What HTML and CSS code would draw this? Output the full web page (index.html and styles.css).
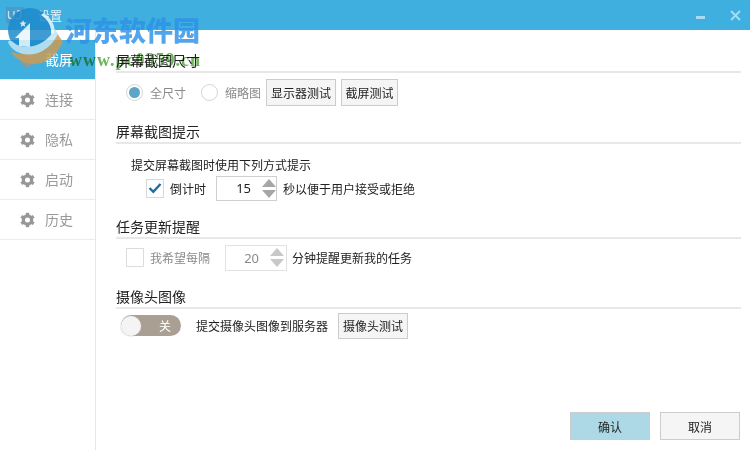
FILE: index.html
```html
<!DOCTYPE html>
<html lang="zh">
<head>
<meta charset="utf-8">
<title>设置</title>
<link rel="stylesheet" href="styles.css">
</head>
<body>
<div class="window">
  <header class="titlebar">
    <div class="title-left">
      <svg class="app-icon" width="18" height="16" viewBox="0 0 18 16"><path d="M2.500 4v5c0 3.500 5.500 3.500 5.500 0V4M11 4h4v5c0 3-3.500 3.500-5 1.500" fill="none" stroke="#c6e4f3" stroke-width="1.300"/></svg>
      <span>设置</span>
    </div>
    <div class="win-controls">
      <span class="win-min"></span>
      <svg width="11" height="11" viewBox="0 0 11 11"><path d="M1 1l9 9M10 1l-9 9" stroke="#a8daf2" stroke-width="2"/></svg>
    </div>
  </header>
  <div class="body">
    <nav class="sidebar">
      <div class="nav-item active"><svg class="gear" viewBox="0 0 16 16"><use href="#gear"/></svg><span>截屏</span></div>
      <div class="nav-item"><svg class="gear" viewBox="0 0 16 16"><use href="#gear"/></svg><span>连接</span></div>
      <div class="nav-item"><svg class="gear" viewBox="0 0 16 16"><use href="#gear"/></svg><span>隐私</span></div>
      <div class="nav-item"><svg class="gear" viewBox="0 0 16 16"><use href="#gear"/></svg><span>启动</span></div>
      <div class="nav-item"><svg class="gear" viewBox="0 0 16 16"><use href="#gear"/></svg><span>历史</span></div>
    </nav>
    <main class="content">
      <section class="sec sec-size">
        <h2>屏幕截图尺寸</h2>
        <div class="row row-size">
          <span class="radio on"></span><span class="muted lbl-full">全尺寸</span>
          <span class="radio"></span><span class="muted lbl-thumb">缩略图</span>
          <button class="btn btn-monitor">显示器测试</button>
          <button class="btn btn-shot">截屏测试</button>
        </div>
      </section>
      <section class="sec sec-hint">
        <h2>屏幕截图提示</h2>
        <p class="hint-text">提交屏幕截图时使用下列方式提示</p>
        <div class="row row-count">
          <span class="check"><svg width="14" height="12" viewBox="0 0 14 12"><path d="M1.500 6l3.800 3.800L12.500 2" fill="none" stroke="#1f6d9c" stroke-width="2.400"/></svg></span>
          <span class="lbl-count">倒计时</span>
          <span class="spin"><span class="spin-val">15</span><span class="arrows"><i class="up"></i><i class="down"></i></span></span>
          <span class="after">秒以便于用户接受或拒绝</span>
        </div>
      </section>
      <section class="sec sec-task">
        <h2>任务更新提醒</h2>
        <div class="row row-task">
          <span class="check off"></span>
          <span class="muted lbl-count">我希望每隔</span>
          <span class="spin dim"><span class="spin-val">20</span><span class="arrows"><i class="up"></i><i class="down"></i></span></span>
          <span class="after">分钟提醒更新我的任务</span>
        </div>
      </section>
      <section class="sec sec-cam">
        <h2>摄像头图像</h2>
        <div class="row row-cam">
          <span class="toggle"><span class="knob"></span><span class="toggle-text">关</span></span>
          <span class="cam-text">提交摄像头图像到服务器</span>
          <button class="btn btn-cam">摄像头测试</button>
        </div>
      </section>
      <div class="footer">
        <button class="btn action primary">确认</button>
        <button class="btn action">取消</button>
      </div>
    </main>
  </div>

  <div class="watermark">
    <svg class="wm-logo" width="66" height="70" viewBox="0 0 66 70">
      <path d="M12 54C25 68 50 70 63 42L57 33C50 52 30 58 12 52z" fill="#c99c58"/>
      <circle cx="30" cy="30" r="22" fill="#1e8acb"/>
      <path d="M8 42C14 58 44 62 58 34L55 29C46 46 24 52 13 42 11 40 9 40 8 42z" fill="#c4e4f3"/>
      <path d="M15 38L30 23V47L19 46V38z" fill="#eaf6fb"/>
      <path d="M44 13C52 19 56 27 54 33L51 34C52 27 48 19 41 15z" fill="#eaf6fb"/>
      <path d="M23 20l1 2.400 2.500.2-1.900 1.600.6 2.500-2.200-1.300-2.200 1.300.6-2.500-1.900-1.600 2.500-.2z" fill="#eaf6fb"/>
    </svg>
    <span class="wm-cn">河东软件园</span>
    <span class="wm-url">www.pc0359.cn</span>
  </div>
</div>
<svg class="defs" width="0" height="0">
  <defs>
    <g id="gear">
      <circle cx="8" cy="8" r="4.600" fill="none" stroke-width="3.200"/>
      <rect x="6.200" y="0.300" width="3.600" height="15.400"/>
      <rect x="6.200" y="0.300" width="3.600" height="15.400" transform="rotate(60 8 8)"/>
      <rect x="6.200" y="0.300" width="3.600" height="15.400" transform="rotate(120 8 8)"/>
      <circle cx="8" cy="8" r="2.700" fill="var(--hole)"/>
    </g>
  </defs>
</svg>
</body>
</html>
```
FILE: styles.css
```css
* { box-sizing: border-box; }
html, body { margin: 0; padding: 0; }
body {
  width: 750px;
  height: 450px;
  overflow: hidden;
  background: #fff;
  font-family: "Noto Sans CJK SC", "Liberation Sans", sans-serif;
  font-size: 12px;
  color: #222;
}
.defs { position: absolute; }
.window { position: relative; width: 750px; height: 450px; display: flex; flex-direction: column; }

.titlebar {
  height: 30px;
  flex: none;
  background: #3fafe0;
  display: flex;
  justify-content: space-between;
  align-items: center;
  color: #e4f4fb;
  padding: 0 9px 0 6px;
}
.title-left { display: flex; align-items: center; gap: 14px; font-size: 12px; }
.app-icon { background: rgba(90, 125, 165, .4); }
.win-controls { display: flex; align-items: center; gap: 25px; }
.win-min { width: 9px; height: 3px; background: #a8daf2; margin-top: 4px; }

.body { flex: 1; display: flex; min-height: 0; }
.sidebar {
  width: 96px;
  flex: none;
  border-right: 1px solid #e6e6f2;
  padding-top: 10px;
}
.nav-item {
  --hole: #fff;
  height: 40px;
  border-bottom: 1px solid #ececec;
  display: flex;
  align-items: center;
  padding-left: 20px;
  gap: 10px;
  font-size: 14px;
  color: #9a9a9a;
}
.nav-item span { margin-bottom: 2px; }
.nav-item.active { --hole: #3fafe0; background: #3fafe0; color: #fff; }
.gear { width: 15px; height: 16px; fill: #979797; stroke: #979797; stroke-width: 0; }
.gear use { stroke: #979797; }

.content { flex: 1; padding: 0 9px 0 20px; position: relative; display: flex; flex-direction: column; }
.sec h2 {
  margin: 0;
  font-size: 14px;
  font-weight: 400;
  line-height: 20px;
  height: 23px;
  color: #222;
  border-bottom: 2px solid #e8e8e8;
}
.sec-size { padding-top: 20px; }
.sec-hint { padding-top: 15px; }
.sec-task { padding-top: 15px; }
.sec-cam { padding-top: 15px; }
.row { display: flex; align-items: center; }
.muted { color: #8a8a8a; }

.row-size { padding: 6px 0 0 10px; height: 33px; }
.radio {
  width: 17px; height: 17px;
  border-radius: 50%;
  border: 1px solid #d4d4d4;
  background: #fff;
  flex: none;
  display: flex;
  align-items: center;
  justify-content: center;
}
.radio.on::after { content: ""; width: 11px; height: 11px; border-radius: 50%; background: #5ba5c8; }
.lbl-full { margin-left: 7px; width: 51px; }
.lbl-thumb { margin-left: 7px; width: 41px; }

.btn {
  font: inherit;
  font-size: 12px;
  color: #222;
  background: #f5f5f5;
  border: 1px solid #cccccc;
  padding: 0;
  height: 27px;
  flex: none;
}
.btn-monitor { width: 70px; }
.btn-shot { width: 57px; margin-left: 5px; }

.hint-text { margin: 0; padding: 12px 0 0 15px; line-height: 18px; height: 30px; }
.row-count { padding: 1px 0 0 30px; height: 27px; }
.check {
  width: 18px; height: 19px;
  border: 1px solid #d8d8d8;
  background: #fff;
  flex: none;
  display: flex;
  align-items: center;
  justify-content: center;
}
.lbl-count { margin-left: 6px; }
.row-count .lbl-count { width: 46px; }
.spin {
  width: 61px; height: 25px;
  border: 1px solid #cfcfcf;
  background: #fff;
  display: flex;
  align-items: center;
  flex: none;
  font-family: "Noto Sans", "Liberation Sans", sans-serif;
  font-size: 13px;
}
.spin-val { width: 45px; text-align: right; padding-right: 11px; }
.arrows { display: flex; flex-direction: column; gap: 3px; }
.arrows i { display: block; width: 0; height: 0; border-left: 7px solid transparent; border-right: 7px solid transparent; }
.arrows .up { border-bottom: 8px solid #a6a6a6; }
.arrows .down { border-top: 8px solid #a6a6a6; }
.spin.dim { border-color: #e2e2e2; width: 62px; height: 26px; }
.spin.dim .spin-val { color: #8a8a8a; width: 44px; }
.spin.dim .up { border-bottom-color: #c8c8c8; }
.spin.dim .down { border-top-color: #c8c8c8; }
.after { margin-left: 6px; }

.row-task { padding: 5px 0 0 10px; height: 32px; }
.row-task .lbl-count { width: 75px; }
.row-task .after { margin-left: 5px; }
.row-task .check { border-color: #dcdcdc; }

.row-cam { padding: 3px 0 0 5px; height: 30px; }
.toggle {
  width: 60px; height: 21px;
  border-radius: 11px;
  background: #a99f92;
  display: flex;
  align-items: center;
  flex: none;
}
.knob {
  width: 20px; height: 20px;
  border-radius: 50%;
  background: #f4f4f4;
  box-shadow: 0 0 2px #bbb;
}
.toggle-text { color: #fff; margin-left: 18px; }
.cam-text { margin-left: 15px; width: 142px; }
.btn-cam { width: 70px; height: 26px; }

.footer {
  margin-top: auto;
  padding-bottom: 10px;
  display: flex;
  justify-content: flex-end;
  gap: 10px;
  padding-right: 1px;
}
.action { width: 80px; height: 28px; }
.primary { background: #add8e6; }

/* watermark over the page */
.watermark { position: absolute; inset: 0; pointer-events: none; }
.wm-logo { position: absolute; left: 0; top: 0; opacity: .85; }
.wm-cn {
  position: absolute; left: 65px; top: 13px;
  font-family: "Noto Sans CJK SC", sans-serif;
  font-size: 27px;
  font-weight: 900;
  line-height: 34px;
  color: rgba(45, 145, 230, .82);
}
.wm-url {
  position: absolute; left: 69px; top: 50px;
  font-family: "Liberation Serif", serif;
  font-size: 18px;
  font-weight: 700;
  letter-spacing: 1px;
  line-height: 20px;
  color: rgb(110, 180, 90);
  mix-blend-mode: multiply;
}
```
